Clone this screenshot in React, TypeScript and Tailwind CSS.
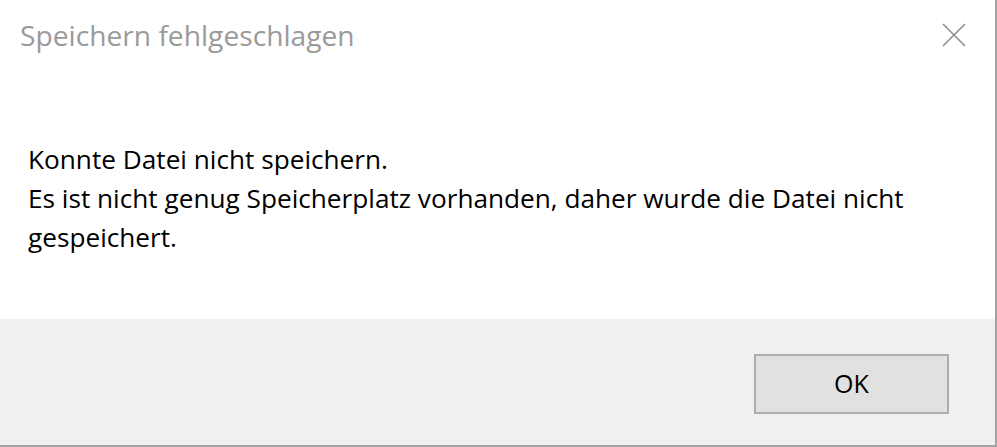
import React from 'react';

const font = { fontFamily: '"Open Sans", "Noto Sans", sans-serif' };

export default function App() {
  return (
    <div
      className="w-[997px] h-[447px] flex flex-col bg-white border-r-2 border-b-2 border-[#a3a3a3]"
      style={font}
    >
      {/* Title bar */}
      <div className="h-[78px] flex items-start justify-between">
        <div className="pl-5 pt-[19px] text-[28.2px] leading-[32px] text-[#9a9a9a]">
          Speichern fehlgeschlagen
        </div>
        <button className="mt-[23px] mr-[29px] w-6 h-6 flex items-center justify-center">
          <svg width="24" height="24" viewBox="0 0 24 24">
            <path d="M1 1 L23 23 M23 1 L1 23" stroke="#8e8e8e" strokeWidth="1.6" fill="none" />
          </svg>
        </button>
      </div>

      {/* Message */}
      <div className="flex-1 pl-7 pt-[62px] pr-10 text-[26.2px] leading-[39px] text-black">
        <p>Konnte Datei nicht speichern.</p>
        <p>Es ist nicht genug Speicherplatz vorhanden, daher wurde die Datei nicht</p>
        <p>gespeichert.</p>
      </div>

      {/* Footer */}
      <div className="h-[126px] bg-[#f0f0f0] flex justify-end items-start pt-[35px] pr-[46px]">
        <button className="w-[195px] h-[60px] border-2 border-[#adadad] bg-[#e1e1e1] text-[25px] text-black">
          OK
        </button>
      </div>
    </div>
  );
}
